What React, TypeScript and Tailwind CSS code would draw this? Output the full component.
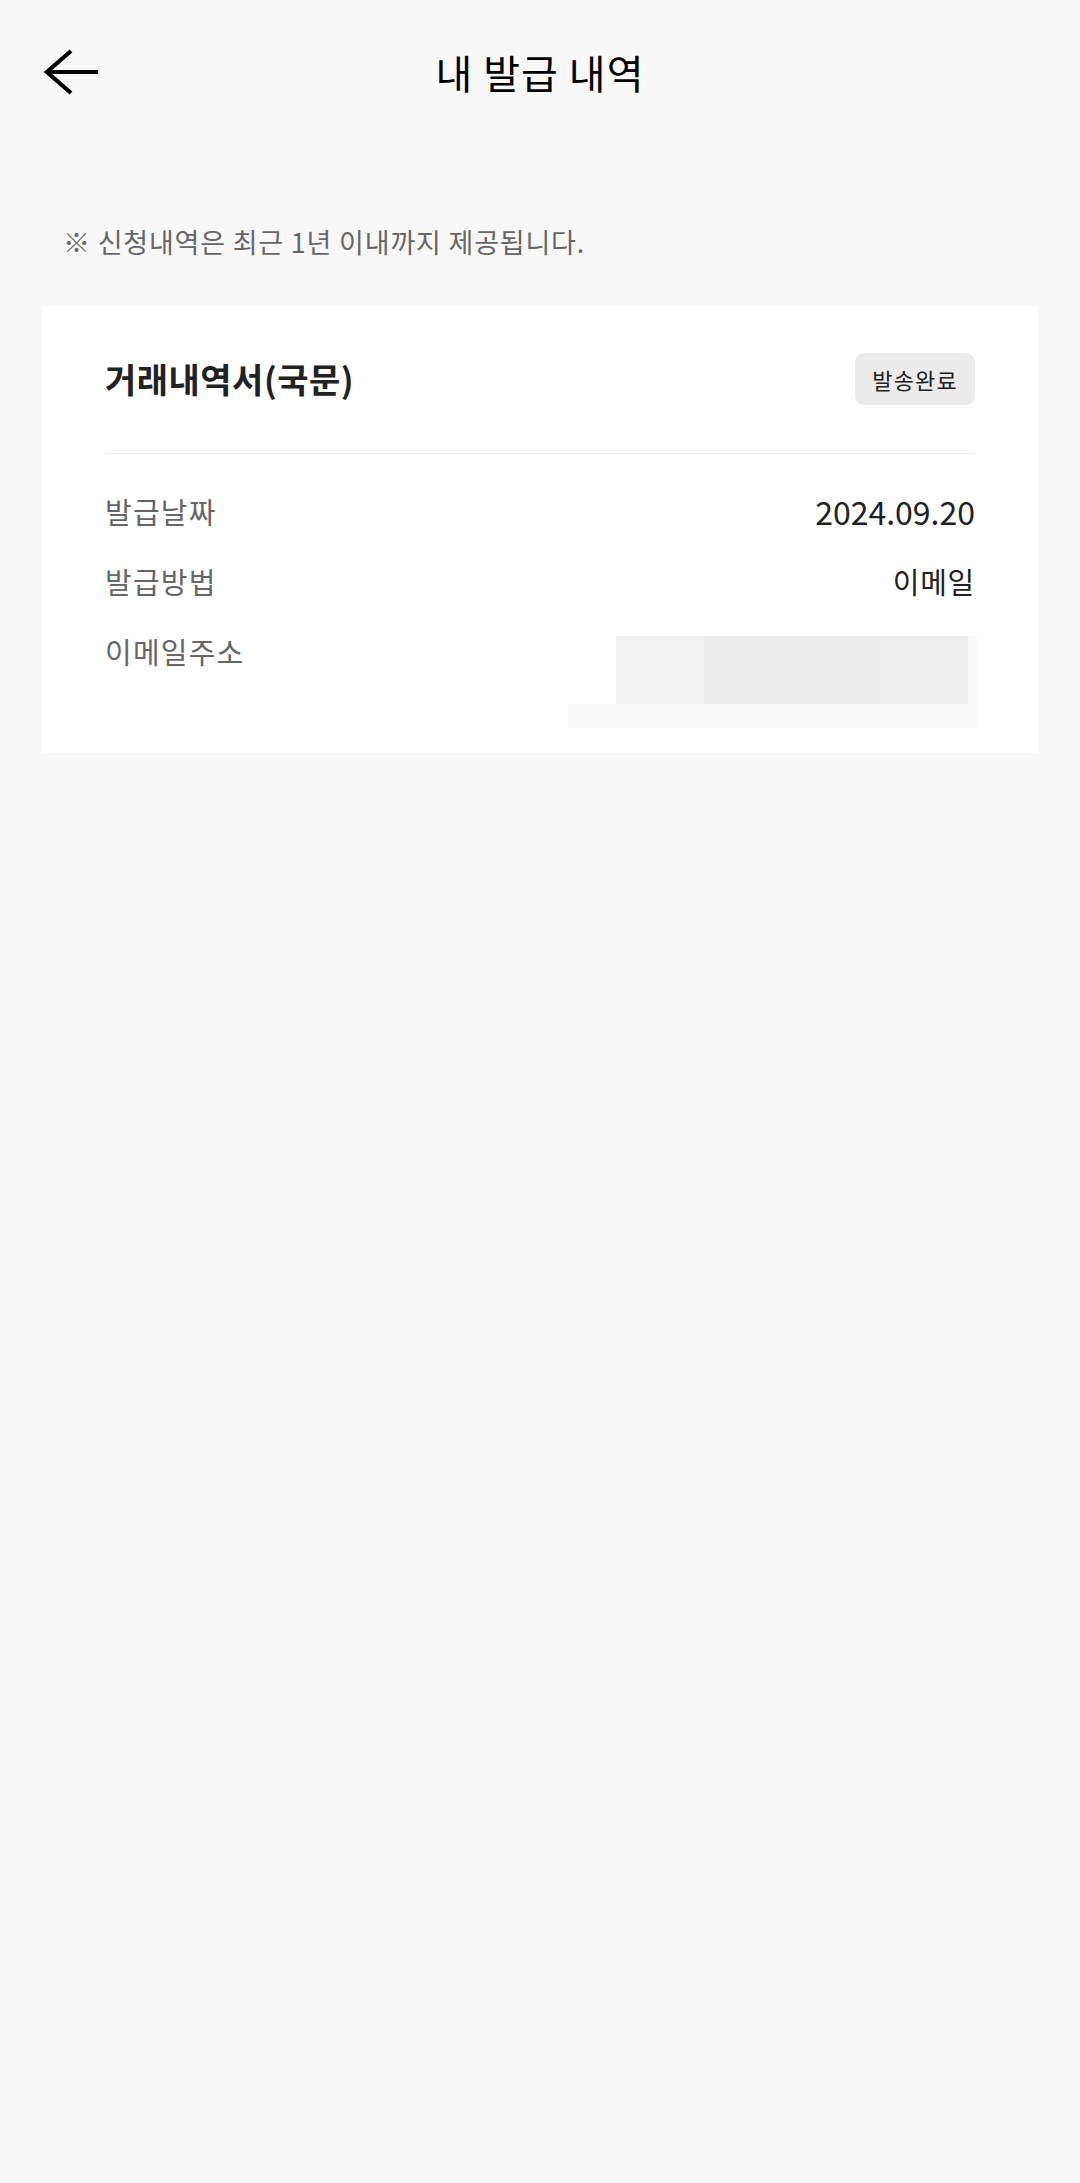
import React from 'react';

const FONT = { fontFamily: '"Noto Sans CJK KR", "Noto Sans", sans-serif' };

const BackArrow: React.FC = () => (
  <svg width="56" height="46" viewBox="0 0 56 46" fill="none">
    <path
      d="M27 2 L2.8 23 L27 44 M2.8 23 H54"
      stroke="#000"
      strokeWidth="4.2"
      strokeLinecap="butt"
      strokeLinejoin="miter"
    />
  </svg>
);

interface RowProps {
  label: string;
  children: React.ReactNode;
}

const InfoRow: React.FC<RowProps> = ({ label, children }) => (
  <div className="flex items-start justify-between">
    <span className="text-[29px] leading-[40px] tracking-[1.2px] text-[#666666]">{label}</span>
    {children}
  </div>
);

const App: React.FC = () => {
  return (
    <div className="min-h-screen w-full bg-[#f8f8f8]" style={FONT}>
      {/* Header */}
      <header className="grid h-[144px] grid-cols-[1fr_auto_1fr] items-center">
        <div className="flex items-center pl-[44px]">
          <BackArrow />
        </div>
        <h1 className="text-[40px] font-normal leading-none tracking-[1px] text-black">내 발급 내역</h1>
        <div />
      </header>

      {/* Notice */}
      <p className="mt-[80px] pl-[63px] text-[27px] leading-[36px] tracking-[0.8px] text-[#666666]">
        ※ 신청내역은 최근 1년 이내까지 제공됩니다.
      </p>

      {/* Card */}
      <section className="mx-[42px] mt-[46px] bg-white px-[63px] pt-[47px] pb-[25px]">
        <div className="flex h-[52px] items-center justify-between">
          <h2 className="text-[34px] font-bold leading-none tracking-[0.5px] text-[#222222]">
            거래내역서(국문)
          </h2>
          <span className="flex h-[52px] items-center rounded-[9px] bg-[#ebebeb] px-[17px] text-[22px] leading-none tracking-[1.2px] text-[#222222]">
            발송완료
          </span>
        </div>

        <div className="mt-[48px] h-px bg-[#ebebeb]" />

        <div className="mt-[37px] flex flex-col gap-[30px]">
          <InfoRow label="발급날짜">
            <span className="text-[32px] leading-[40px] tracking-[0px] text-[#222222]">2024.09.20</span>
          </InfoRow>
          <InfoRow label="발급방법">
            <span className="text-[29px] leading-[40px] tracking-[0.7px] text-[#222222]">이메일</span>
          </InfoRow>
          <InfoRow label="이메일주소">
            <div className="mr-[-4px] mt-[5px] flex w-[411px] flex-col">
              <div className="flex h-[68px] pl-[48px]">
                <div className="w-[88px] bg-[#f1f1f1]" />
                <div className="w-[176px] bg-[#ededed]" />
                <div className="w-[88px] bg-[#eeeeee]" />
                <div className="w-[11px] bg-[#fafafa]" />
              </div>
              <div className="h-[24px] bg-[#fafafa]" />
            </div>
          </InfoRow>
        </div>
      </section>
    </div>
  );
};

export default App;
